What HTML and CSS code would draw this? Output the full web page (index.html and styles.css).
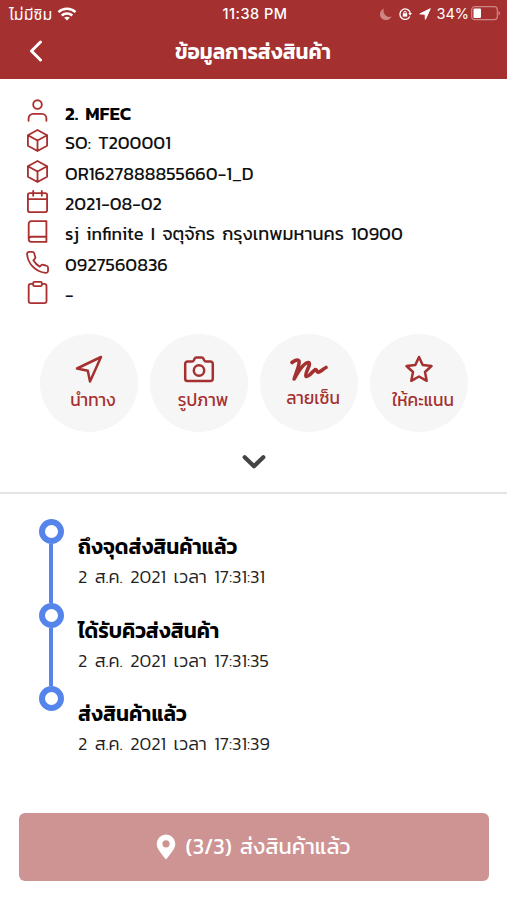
FILE: index.html
```html
<!DOCTYPE html>
<html lang="th">
<head>
<meta charset="utf-8">
<title>ข้อมูลการส่งสินค้า</title>
<link rel="stylesheet" href="styles.css">
</head>
<body>
<header class="top">
  <div class="status">
    <div class="carrier"><span class="sim">ไม่มีซิม</span>
      <svg width="20" height="14" viewBox="0 0 20 14" fill="none" stroke="#fff" stroke-width="2.5"><path d="M1.500 5.200C6.300.7 13.700.7 18.500 5.200M4.700 8.500c3-2.800 7.600-2.800 10.600 0"/><path d="M10 13.500 7.200 10.700c1.600-1.400 4-1.400 5.600 0z" fill="#fff" stroke="none"/></svg>
    </div>
    <span class="clock">11:38 PM</span>
    <div class="indicators">
      <svg width="12" height="12" viewBox="0 0 12 12" fill="#cf8585"><path d="M4 .5A6 6 0 1 0 11.500 8.500 6 6 0 0 1 4 .5z"/></svg>
      <svg class="lock" width="13" height="12" viewBox="0 0 13 12" fill="none" stroke="#fff" stroke-width="1.300"><path d="M10.800 8.500A5.200 5.200 0 1 1 11.200 5"/><path d="M9.300 5h3.700l-1.900 2.500z" fill="#fff" stroke="none"/><path d="M4.800 6V4.500a1.200 1.200 0 0 1 2.400 0V6" stroke-width="1"/><path d="M3.800 5.400h4.400v3.200H3.800z" fill="#fff" stroke="none"/></svg>
      <svg class="loc" width="12" height="12" viewBox="0 0 12 12" fill="#fff" stroke="#fff" stroke-linejoin="round"><path d="M11.300.7.8 5.900l5.300.3.300 5.200z"/></svg>
      <span class="percent">34%</span>
      <svg class="battery" width="30" height="15" viewBox="0 0 30 15"><rect x=".7" y=".7" width="25.600" height="13" rx="3" fill="none" stroke="#cf8585" stroke-width="1.200"/><rect x="2.500" y="2.500" width="7.500" height="9.500" rx="1" fill="#fff"/><path d="M27.500 5v4.500c2-.8 2-3.700 0-4.500z" fill="#cf8585"/></svg>
    </div>
  </div>
  <div class="nav">
    <svg class="back" width="14" height="22" viewBox="0 0 14 22" fill="none" stroke="#fff" stroke-width="3" stroke-linecap="round" stroke-linejoin="round"><path d="M11.500 2 2.500 11l9 9"/></svg>
    <h1 class="title">ข้อมูลการส่งสินค้า</h1>
  </div>
</header>
<section class="details">
  <div class="row"><svg class="icon" viewBox="0 0 24 24"><circle cx="12" cy="5.800" r="4.500"/><path d="M2.700 22.800v-2.500a4.800 4.800 0 0 1 4.800-4.800h9a4.800 4.800 0 0 1 4.800 4.800v2.500"/></svg><span class="name">2. MFEC</span></div>
  <div class="row"><svg class="icon" viewBox="0 0 24 24"><path d="M12 1 22 6.500v11L12 23 2 17.500v-11zM2 6.500 12 12l10-5.500M12 12v11"/></svg><span>SO: T200001</span></div>
  <div class="row"><svg class="icon" viewBox="0 0 24 24"><path d="M12 1 22 6.500v11L12 23 2 17.500v-11zM2 6.500 12 12l10-5.500M12 12v11"/></svg><span>OR1627888855660-1_D</span></div>
  <div class="row"><svg class="icon" viewBox="0 0 24 24"><rect x="2" y="3.300" width="20" height="19.700" rx="2"/><path d="M2 9.500h20M7.500 1v5M16.500 1v5"/></svg><span>2021-08-02</span></div>
  <div class="row"><svg class="icon" viewBox="0 0 24 24"><path d="M21.300 17.500H5.500a2.700 2.700 0 0 0 0 5.400h15.800V1.100H5.500A2.700 2.700 0 0 0 2.800 3.800v16.400"/></svg><span>sj infinite I จตุจักร กรุงเทพมหานคร 10900</span></div>
  <div class="row"><svg class="icon" viewBox="0 0 24 24"><path d="M23 17.400v3.300a2.200 2.200 0 0 1-2.400 2.200A21.800 21.800 0 0 1 1.100 3.400 2.200 2.200 0 0 1 3.300 1h3.300a2.200 2.200 0 0 1 2.200 1.900c.1 1 .4 2.100.8 3.100a2.200 2.200 0 0 1-.5 2.300L7.700 9.700a17.600 17.600 0 0 0 6.600 6.600l1.400-1.400a2.200 2.200 0 0 1 2.300-.5c1 .4 2 .6 3.100.8a2.200 2.200 0 0 1 1.900 2.200z"/></svg><span>0927560836</span></div>
  <div class="row"><svg class="icon" viewBox="0 0 24 24"><rect x="2.800" y="3" width="18.600" height="20" rx="2.200"/><rect x="7.500" y="1" width="9" height="4.400" rx="1.200" fill="#fff"/></svg><span>-</span></div>
</section>
<nav class="actions">
  <div class="action"><svg viewBox="0 0 32 28"><path d="M28 2 4 13.500l10.800 2.200L17 26.500z"/></svg><span>นำทาง</span></div>
  <div class="action"><svg viewBox="0 0 32 28"><path d="M4.500 6.500h4.700q1 0 1.500-1l1-2q.5-1 1.500-1h5.600q1 0 1.500 1l1 2q.5 1 1.500 1h4.700A2.300 2.300 0 0 1 29.800 8.800v15A2.300 2.300 0 0 1 27.500 26h-23a2.300 2.300 0 0 1-2.300-2.300V8.800a2.300 2.300 0 0 1 2.300-2.300z"/><circle cx="16" cy="15.500" r="5.200"/></svg><span>รูปภาพ</span></div>
  <div class="action"><svg class="scribble" viewBox="0 0 38 24"><path d="M2 5.500C4.500 3.500 8 2 9 4 10 7.500 6 15.500 4.200 22 8 15 14 5.500 18.500 5.500 22 6.500 14 17 16 19.200 18.500 21 23 13.500 25.500 12.500 27 12.500 26.500 15.500 28.500 15.200 30.500 15 33 12 36 10.500"/></svg><span class="sign">ลายเซ็น</span></div>
  <div class="action"><svg viewBox="0 0 32 28"><path d="m16 2 3.700 8 8.800 1-6.500 6 1.700 8.800L16 21.500l-7.700 4.300L10 17l-6.500-6 8.800-1z"/></svg><span>ให้คะแนน</span></div>
</nav>
<div class="expand"><svg width="24" height="16" viewBox="0 0 24 16" fill="none" stroke="#444" stroke-width="4.200" stroke-linecap="round" stroke-linejoin="round"><path d="m2.700 3.200 9.300 9 9.300-9"/></svg></div>
<main class="timeline">
  <div class="event"><div class="track"><i class="dot"></i><i class="line"></i></div><div class="text"><h2>ถึงจุดส่งสินค้าแล้ว</h2><p>2 ส.ค. 2021 เวลา 17:31:31</p></div></div>
  <div class="event"><div class="track"><i class="dot"></i><i class="line"></i></div><div class="text"><h2>ได้รับคิวส่งสินค้า</h2><p>2 ส.ค. 2021 เวลา 17:31:35</p></div></div>
  <div class="event"><div class="track"><i class="dot"></i></div><div class="text"><h2>ส่งสินค้าแล้ว</h2><p>2 ส.ค. 2021 เวลา 17:31:39</p></div></div>
</main>
<button class="submit"><svg width="20" height="26" viewBox="0 0 20 26" fill="#fff"><path fill-rule="evenodd" d="M10 .5A9.300 9.300 0 0 0 .7 9.800C.7 14 3.500 17.500 10 25.500c6.500-8 9.300-11.500 9.300-15.700A9.300 9.300 0 0 0 10 .5zM10 6.200a3.600 3.600 0 1 1 0 7.200 3.600 3.600 0 0 1 0-7.200z"/></svg><span>(3/3) ส่งสินค้าแล้ว</span></button>
</body>
</html>
```
FILE: styles.css
```css
* { box-sizing: border-box; }
body { margin: 0; width: 507px; height: 900px; overflow: hidden; background: #fff; color: #111; font-family: Kanit, Prompt, "Noto Sans Thai", "Noto Sans", sans-serif; font-size: 18.2px; }
svg { display: block; flex: none; }
span, h1, h2, p { white-space: nowrap; }
h1, h2, p { margin: 0; }
.top { height: 79px; background: #a53030; color: #fff; }
.status { height: 27px; display: grid; grid-template-columns: 1fr auto 1fr; align-items: center; padding: 0 6px 0 9px; font-family: Inter, "Noto Sans Thai", sans-serif; font-size: 14.500px; }
.carrier { display: flex; align-items: center; gap: 5px; }
.sim { font-size: 16px; margin-top: 2px; }
.clock { font-weight: 500; letter-spacing: .5px; }
.indicators { display: flex; align-items: center; justify-content: flex-end; }
.lock { margin-left: 7px; }
.loc { margin-left: 7px; }
.percent { margin-left: 5px; }
.battery { margin-left: 2px; }
.nav { height: 50px; display: grid; grid-template-columns: 30px 1fr 30px; align-items: center; padding: 0 30px 0 29px; }
.back { margin-top: -2px; }
.title { font-size: 20.700px; line-height: 28px; font-weight: 600; text-align: center; }
.details { padding: 17px 0 0 26px; height: 228px; }
.row { height: 30.300px; display: flex; align-items: center; gap: 16px; line-height: 30px; word-spacing: 3px; }
.row span { margin-top: 4px; }
.icon { width: 23px; height: 23px; fill: none; stroke: #aa3030; stroke-width: 1.900; stroke-linejoin: round; stroke-linecap: round; margin-top: -1px; }
.row .name { font-weight: 600; color: #000; font-size: 18.700px; }
.actions { display: flex; gap: 12px; padding: 27px 0 0 40px; }
.action { width: 98px; height: 98px; border-radius: 50%; background: #f6f6f6; color: #a53030; display: flex; flex-direction: column; align-items: center; padding-top: 21px; }
.action svg { width: 32px; height: 28px; fill: none; stroke: #a53030; stroke-width: 2.500; stroke-linejoin: round; stroke-linecap: round; }
.action .scribble { width: 38px; height: 24px; margin: 2px 0; stroke-width: 3.600; }
.action span { margin: 5px -4px 0 4px; line-height: 24px; font-size: 17.200px; }
.action .sign { margin-top: 3px; }
.expand { height: 62px; border-bottom: 2px solid #e4e4e4; display: flex; justify-content: center; padding-top: 22px; }
.timeline { padding: 25px 0 0 38px; height: 319px; }
.event { height: 83.500px; display: flex; gap: 14px; }
.track { width: 26px; display: flex; flex-direction: column; align-items: center; }
.dot { width: 25px; height: 25px; flex: none; border: 6px solid #5585eb; border-radius: 50%; }
.line { width: 4px; flex: 1; background: #5585eb; }
.text h2 { margin-top: 14px; font-size: 20.800px; line-height: 28px; font-weight: 600; color: #000; }
.text p { font-size: 18.200px; line-height: 32px; font-weight: 300; color: #222; word-spacing: 3.300px; }
.submit { display: flex; align-items: center; justify-content: center; gap: 10px; width: 470px; height: 68px; margin: 0 0 0 19px; border: 0; border-radius: 6px; background: #ce9393; color: #fff; font: 400 21.800px/30px Kanit, Prompt, "Noto Sans Thai", "Noto Sans", sans-serif; word-spacing: 3px; }
.submit span { margin-right: 2px; }
```
